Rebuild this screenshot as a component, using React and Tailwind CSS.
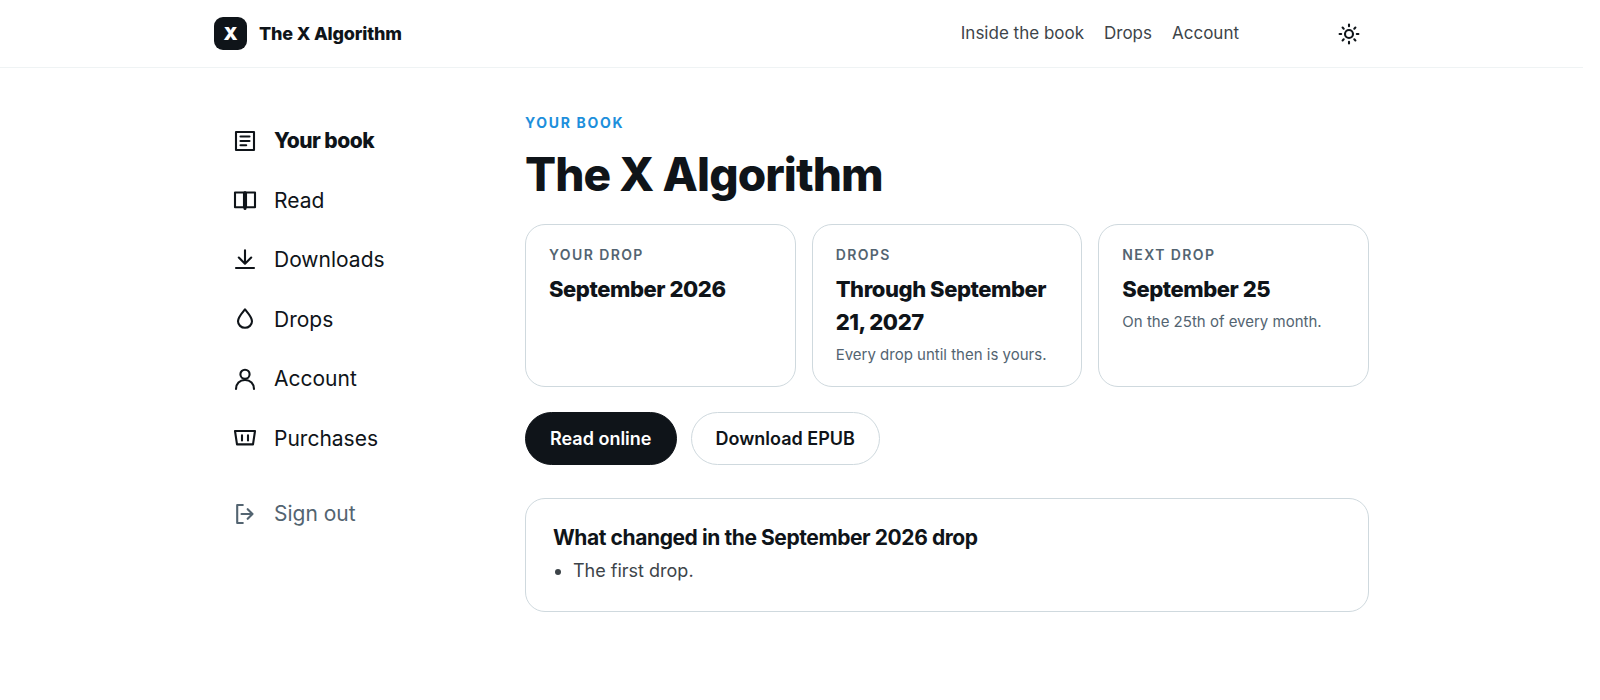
import React from 'react';

const navLinks = ['Inside the book', 'Drops', 'Account'];

const icons = {
  book: (
    <>
      <rect x="3" y="3" width="18" height="18" />
      <path d="M7.5 7.5h9M7.5 12h9M7.5 16.3h5.7" />
    </>
  ),
  read: (
    <>
      <path d="M2 4.5h9v14.7H2zM13 4.5h9v14.7h-9z" />
      <path d="M12 4.5v16" strokeWidth="3" />
    </>
  ),
  download: <path d="M12 2.2v13.3M5.8 9.5l6.2 6.2 6.2-6.2M3 20h18" />,
  drop: <path d="M12 2.4C9 6.2 5 10.2 5 14.2a7 6.6 0 0 0 14 0c0-4-4-8-7-11.8z" />,
  user: (
    <>
      <circle cx="12" cy="7.3" r="4.6" />
      <path d="M3 22c0-5.4 3.6-9 9-9s9 3.6 9 9" />
    </>
  ),
  basket: <path d="M2 5h20l-2 13.4H4zM9 9.2v5.3M15 9.2v5.3" />,
  signOut: <path d="M9.8 3H4.2v18h5.6M8.5 12h10.7M14.7 7.2l4.8 4.8-4.8 4.8" />,
};

const sidebarLinks = [
  { label: 'Your book', icon: 'book', active: true },
  { label: 'Read', icon: 'read' },
  { label: 'Downloads', icon: 'download' },
  { label: 'Drops', icon: 'drop' },
  { label: 'Account', icon: 'user' },
  { label: 'Purchases', icon: 'basket' },
];

const stats = [
  { label: 'Your drop', value: 'September 2026' },
  { label: 'Drops', value: 'Through September 21, 2027', note: 'Every drop until then is yours.' },
  { label: 'Next drop', value: 'September 25', note: 'On the 25th of every month.' },
];

function Icon({ children }) {
  return (
    <svg
      viewBox="0 0 24 24"
      className="size-6 shrink-0"
      fill="none"
      stroke="currentColor"
      strokeWidth="2.1"
      strokeLinecap="round"
      strokeLinejoin="round"
      aria-hidden="true"
    >
      {children}
    </svg>
  );
}

function Header() {
  return (
    <header className="border-b border-[#eff3f4]">
      <div className="mx-auto flex h-[67px] max-w-[1155px] items-center">
        <a href="#" className="flex items-center gap-3 text-lg font-extrabold tracking-[-0.01em]">
          <span className="flex size-[33px] items-center justify-center rounded-[9px] bg-[#0f1419] font-black text-white">
            X
          </span>
          The X Algorithm
        </a>
        <nav className="ml-auto flex gap-5 text-[17px] text-[#3d4449]">
          {navLinks.map((link) => (
            <a key={link} href="#" className="hover:underline">
              {link}
            </a>
          ))}
        </nav>
        <button type="button" aria-label="Toggle theme" className="ml-[90px] flex size-10 items-center justify-center rounded-full">
          <Icon>
            <circle cx="12" cy="12" r="4" />
            <path d="M12 2.6v1.6M12 19.8v1.6M2.6 12h1.6M19.8 12h1.6M5.6 5.6l1.1 1.1M17.3 17.3l1.1 1.1M5.6 18.4l1.1-1.1M17.3 6.7l1.1-1.1" />
          </Icon>
        </button>
      </div>
    </header>
  );
}

function Sidebar() {
  return (
    <nav className="w-[247px] shrink-0 text-[21px] leading-normal">
      <ul className="space-y-1">
        {sidebarLinks.map(({ label, icon, active }) => (
          <li key={label}>
            <a href="#" className={`flex items-center gap-[17px] px-[19px] py-3 ${active ? 'font-extrabold tracking-tight' : ''}`}>
              <Icon>{icons[icon]}</Icon>
              {label}
            </a>
          </li>
        ))}
      </ul>
      <button type="button" className="mt-5 flex items-center gap-[17px] px-[19px] py-3 text-[#536471]">
        <Icon>{icons.signOut}</Icon>
        Sign out
      </button>
    </nav>
  );
}

function StatCard({ label, value, note }) {
  return (
    <div className="rounded-[20px] border border-[#cfd9de] px-[23px] pt-[19px] pb-5">
      <p className="text-sm leading-normal font-semibold tracking-widest text-[#536471] uppercase">{label}</p>
      <p className="mt-2 text-[22px] leading-[33px] font-extrabold tracking-[-0.02em]">{value}</p>
      {note && <p className="mt-1 text-[15px] leading-[23px] text-[#536471]">{note}</p>}
    </div>
  );
}

function App() {
  return (
    <div className="min-h-screen bg-white pr-[17px] font-['Inter',sans-serif] text-[#0f1419]">
      <Header />
      <div className="mx-auto flex max-w-[1155px] gap-16 pt-[45px] pb-16">
        <Sidebar />
        <main className="min-w-0 flex-1">
          <p className="text-sm font-bold tracking-[0.12em] text-[#1d8fdc] uppercase">Your book</p>
          <h1 className="mt-[13px] text-[46px] leading-[56px] font-extrabold tracking-[-0.02em]">The X Algorithm</h1>
          <div className="mt-[22px] grid grid-cols-3 gap-4">
            {stats.map((stat) => (
              <StatCard key={stat.label} {...stat} />
            ))}
          </div>
          <div className="mt-[25px] flex gap-3.5">
            <button type="button" className="h-[53px] rounded-full border border-[#0f1419] bg-[#0f1419] px-6 text-lg font-semibold text-white">
              Read online
            </button>
            <button type="button" className="h-[53px] rounded-full border border-[#cfd9de] px-6 text-lg font-semibold">
              Download EPUB
            </button>
          </div>
          <section className="mt-[33px] rounded-[20px] border border-[#cfd9de] px-[27px] pt-[25px] pb-6">
            <h2 className="text-[21px] leading-7 font-bold tracking-[-0.02em]">What changed in the September 2026 drop</h2>
            <ul className="mt-[3px] list-disc pl-5 text-lg leading-8 text-[#3d4449]">
              <li>The first drop.</li>
            </ul>
          </section>
        </main>
      </div>
    </div>
  );
}

export default App;
